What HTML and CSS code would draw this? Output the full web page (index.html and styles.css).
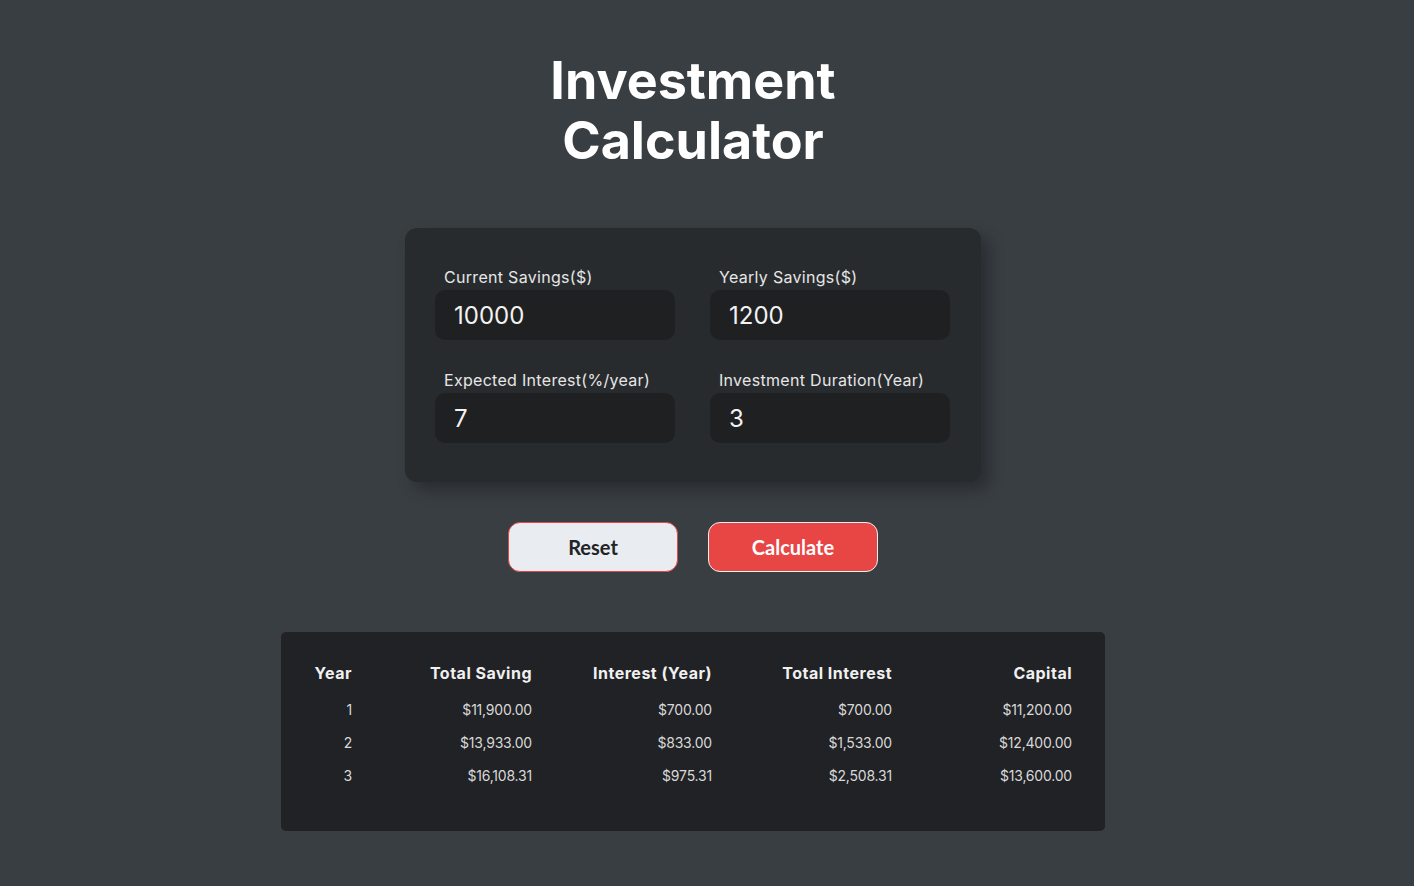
FILE: index.html
```html
<!DOCTYPE html>
<html lang="en">
<head>
<meta charset="utf-8">
<title>Investment Calculator</title>
<link rel="stylesheet" href="styles.css">
</head>
<body>
<div class="app">
  <h1 class="title">Investment<br>Calculator</h1>

  <form class="card">
    <div class="field">
      <label class="label">Current Savings($)</label>
      <input class="input" type="text" value="10000">
    </div>
    <div class="field">
      <label class="label">Yearly Savings($)</label>
      <input class="input" type="text" value="1200">
    </div>
    <div class="field">
      <label class="label">Expected Interest(%/year)</label>
      <input class="input" type="text" value="7">
    </div>
    <div class="field">
      <label class="label">Investment Duration(Year)</label>
      <input class="input" type="text" value="3">
    </div>
  </form>

  <div class="actions">
    <button class="btn btn-reset" type="button">Reset</button>
    <button class="btn btn-calc" type="button">Calculate</button>
  </div>

  <div class="result">
    <div class="grid head">
      <div>Year</div><div>Total Saving</div><div>Interest (Year)</div><div>Total Interest</div><div>Capital</div>
    </div>
    <div class="grid row">
      <div>1</div><div>$11,900.00</div><div>$700.00</div><div>$700.00</div><div>$11,200.00</div>
    </div>
    <div class="grid row">
      <div>2</div><div>$13,933.00</div><div>$833.00</div><div>$1,533.00</div><div>$12,400.00</div>
    </div>
    <div class="grid row">
      <div>3</div><div>$16,108.31</div><div>$975.31</div><div>$2,508.31</div><div>$13,600.00</div>
    </div>
  </div>
</div>
</body>
</html>
```

FILE: styles.css
```css
html, body {
  margin: 0;
  padding: 0;
  background: #393e43;
  height: 100%;
}

body {
  font-family: "Inter", "DejaVu Sans", sans-serif;
  color: #ffffff;
  overflow: hidden;
}

.app {
  width: 1386px;
  display: flex;
  flex-direction: column;
  align-items: center;
}

.title {
  margin: 51px 0 0;
  font-size: 52px;
  line-height: 60px;
  font-weight: 700;
  text-align: center;
  color: #ffffff;
  letter-spacing: 0;
}

.card {
  margin-top: 57px;
  width: 576px;
  box-sizing: border-box;
  padding: 39px 30px 39px 30px;
  background: #282b2e;
  border-radius: 12px;
  box-shadow: 8px 8px 16px rgba(0, 0, 0, 0.28);
  display: grid;
  grid-template-columns: 240px 240px;
  column-gap: 35px;
  row-gap: 30px;
}

.field {
  display: flex;
  flex-direction: column;
  gap: 3px;
}

.label {
  padding-left: 9px;
  font-size: 16px;
  line-height: 20px;
  color: #e6e6e6;
  letter-spacing: 0.3px;
}

.input {
  height: 50px;
  box-sizing: border-box;
  border: none;
  outline: none;
  border-radius: 10px;
  background: #1f2022;
  color: #f2f2f2;
  font-family: "Inter", "DejaVu Sans", sans-serif;
  font-size: 24px;
  padding: 0 19px;
  width: 240px;
}

.actions {
  margin-top: 40px;
  display: flex;
  gap: 30px;
}

.btn {
  width: 170px;
  height: 50px;
  border-radius: 12px;
  font-family: "Lato", sans-serif;
  font-weight: 700;
  font-size: 20px;
  cursor: pointer;
}

.btn-reset {
  background: #e9ecf1;
  color: #222426;
  border: 1px solid #e84545;
}

.btn-calc {
  background: #e84545;
  color: #ffffff;
  border: 1px solid #f1f1f1;
}

.result {
  margin-top: 60px;
  width: 824px;
  box-sizing: border-box;
  padding: 25px 33px 39px;
  background: #212225;
  border-radius: 5px;
}

.grid {
  display: grid;
  grid-template-columns: 1fr repeat(4, 180px);
  text-align: right;
  align-items: center;
}

.head {
  height: 32px;
  margin-bottom: 4px;
  font-size: 16px;
  font-weight: 700;
  color: #f0f0f0;
  letter-spacing: 0.5px;
}

.row {
  height: 33px;
  font-size: 14px;
  color: #d8d8d8;
  letter-spacing: -0.2px;
}
```
